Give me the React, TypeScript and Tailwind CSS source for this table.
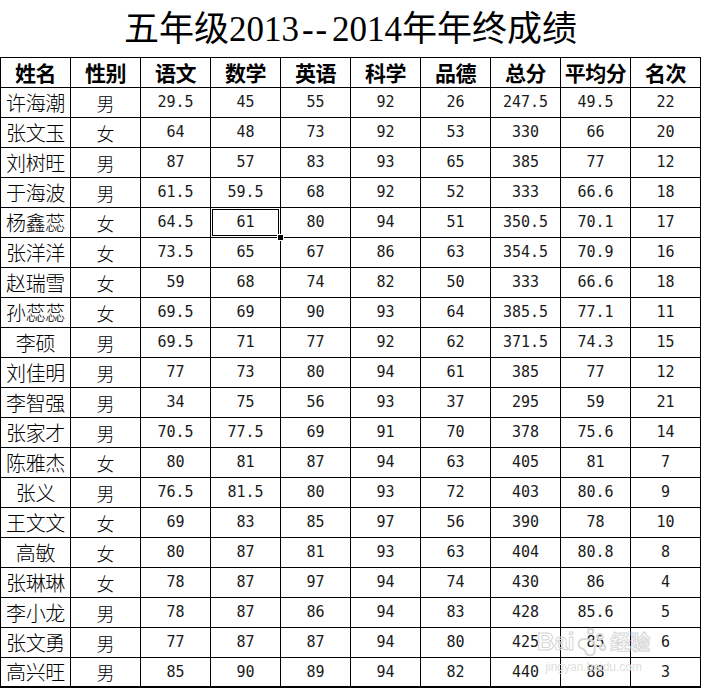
import React from "react";
import { PawPrint } from "lucide-react";

const headers = ["姓名", "性别", "语文", "数学", "英语", "科学", "品德", "总分", "平均分", "名次"];

const rows: string[][] = [
  ["许海潮", "男", "29.5", "45", "55", "92", "26", "247.5", "49.5", "22"],
  ["张文玉", "女", "64", "48", "73", "92", "53", "330", "66", "20"],
  ["刘树旺", "男", "87", "57", "83", "93", "65", "385", "77", "12"],
  ["于海波", "男", "61.5", "59.5", "68", "92", "52", "333", "66.6", "18"],
  ["杨鑫蕊", "女", "64.5", "61", "80", "94", "51", "350.5", "70.1", "17"],
  ["张洋洋", "女", "73.5", "65", "67", "86", "63", "354.5", "70.9", "16"],
  ["赵瑞雪", "女", "59", "68", "74", "82", "50", "333", "66.6", "18"],
  ["孙蕊蕊", "女", "69.5", "69", "90", "93", "64", "385.5", "77.1", "11"],
  ["李硕", "男", "69.5", "71", "77", "92", "62", "371.5", "74.3", "15"],
  ["刘佳明", "男", "77", "73", "80", "94", "61", "385", "77", "12"],
  ["李智强", "男", "34", "75", "56", "93", "37", "295", "59", "21"],
  ["张家才", "男", "70.5", "77.5", "69", "91", "70", "378", "75.6", "14"],
  ["陈雅杰", "女", "80", "81", "87", "94", "63", "405", "81", "7"],
  ["张义", "男", "76.5", "81.5", "80", "93", "72", "403", "80.6", "9"],
  ["王文文", "女", "69", "83", "85", "97", "56", "390", "78", "10"],
  ["高敏", "女", "80", "87", "81", "93", "63", "404", "80.8", "8"],
  ["张琳琳", "女", "78", "87", "97", "94", "74", "430", "86", "4"],
  ["李小龙", "男", "78", "87", "86", "94", "83", "428", "85.6", "5"],
  ["张文勇", "男", "77", "87", "87", "94", "80", "425", "85", "6"],
  ["高兴旺", "男", "85", "90", "89", "94", "82", "440", "88", "3"],
];

export default function App() {
  return (
    <div className="relative w-[701px] h-[689px] overflow-hidden bg-white text-black">
      <div className="h-[57px] flex items-center justify-center pt-[2px] [font-family:'Liberation_Serif','Noto_Sans_CJK_SC',serif] text-[35px] leading-none">
        <span>
          五年级2013<span className="px-[3px] tracking-[0.05em]">--</span>2014年年终成绩
        </span>
      </div>
      <div className="grid grid-cols-[repeat(10,70px)] border-l border-t border-black">
        {headers.map((h) => (
          <div
            key={h}
            className="h-[30px] border-r border-b border-black flex items-center justify-center [font-family:'Noto_Sans_CJK_SC',sans-serif] font-bold text-[21px] leading-none tracking-[-0.5px]"
          >
            {h}
          </div>
        ))}
        {rows.map((r, ri) =>
          r.map((c, ci) => {
            const last = ri === rows.length - 1;
            const selected = ri === 4 && ci === 3;
            let font = "[font-family:'DejaVu_Sans_Mono',monospace] text-[15px] text-[#1a1a1a]";
            if (ci === 0) font = "[font-family:'Noto_Sans_CJK_SC',sans-serif] text-[20px] tracking-[-0.3px]";
            if (ci === 1) font = "[font-family:'Noto_Sans_CJK_SC',sans-serif] text-[18px]";
            return (
              <div
                key={ri + "-" + ci}
                className={
                  "relative h-[30px] border-r border-black flex items-center justify-center leading-none font-light " +
                  (last ? "border-b-2 " : "border-b ") +
                  font
                }
              >
                {c}
                {selected && (
                  <>
                    <div className="absolute -top-px -left-px -right-px -bottom-px border-[3px] border-double border-black" />
                    <div className="absolute -right-[4px] -bottom-[4px] w-[7px] h-[7px] bg-black border border-white z-10" />
                  </>
                )}
              </div>
            );
          })
        )}
      </div>
      <div className="absolute left-[537px] top-[626px] flex flex-col items-center pointer-events-none text-[#dedede]">
        <div className="flex items-center gap-[2px]">
          <span className="[font-family:'Liberation_Sans',sans-serif] font-bold text-[24px] leading-none text-transparent [-webkit-text-stroke:1px_#d6d6d6]">
            Bai
          </span>
          <PawPrint size={32} strokeWidth={1.5} className="text-[#d8d8d8]" />
          <span className="[font-family:'Noto_Sans_CJK_SC',sans-serif] font-bold text-[20px] leading-none text-transparent [-webkit-text-stroke:1px_#d6d6d6]">
            经验
          </span>
        </div>
        <span className="[font-family:'Liberation_Sans',sans-serif] text-[12px] leading-none mt-[3px] text-[#e0e0e0]">
          jingyan.baidu.com
        </span>
      </div>
    </div>
  );
}
